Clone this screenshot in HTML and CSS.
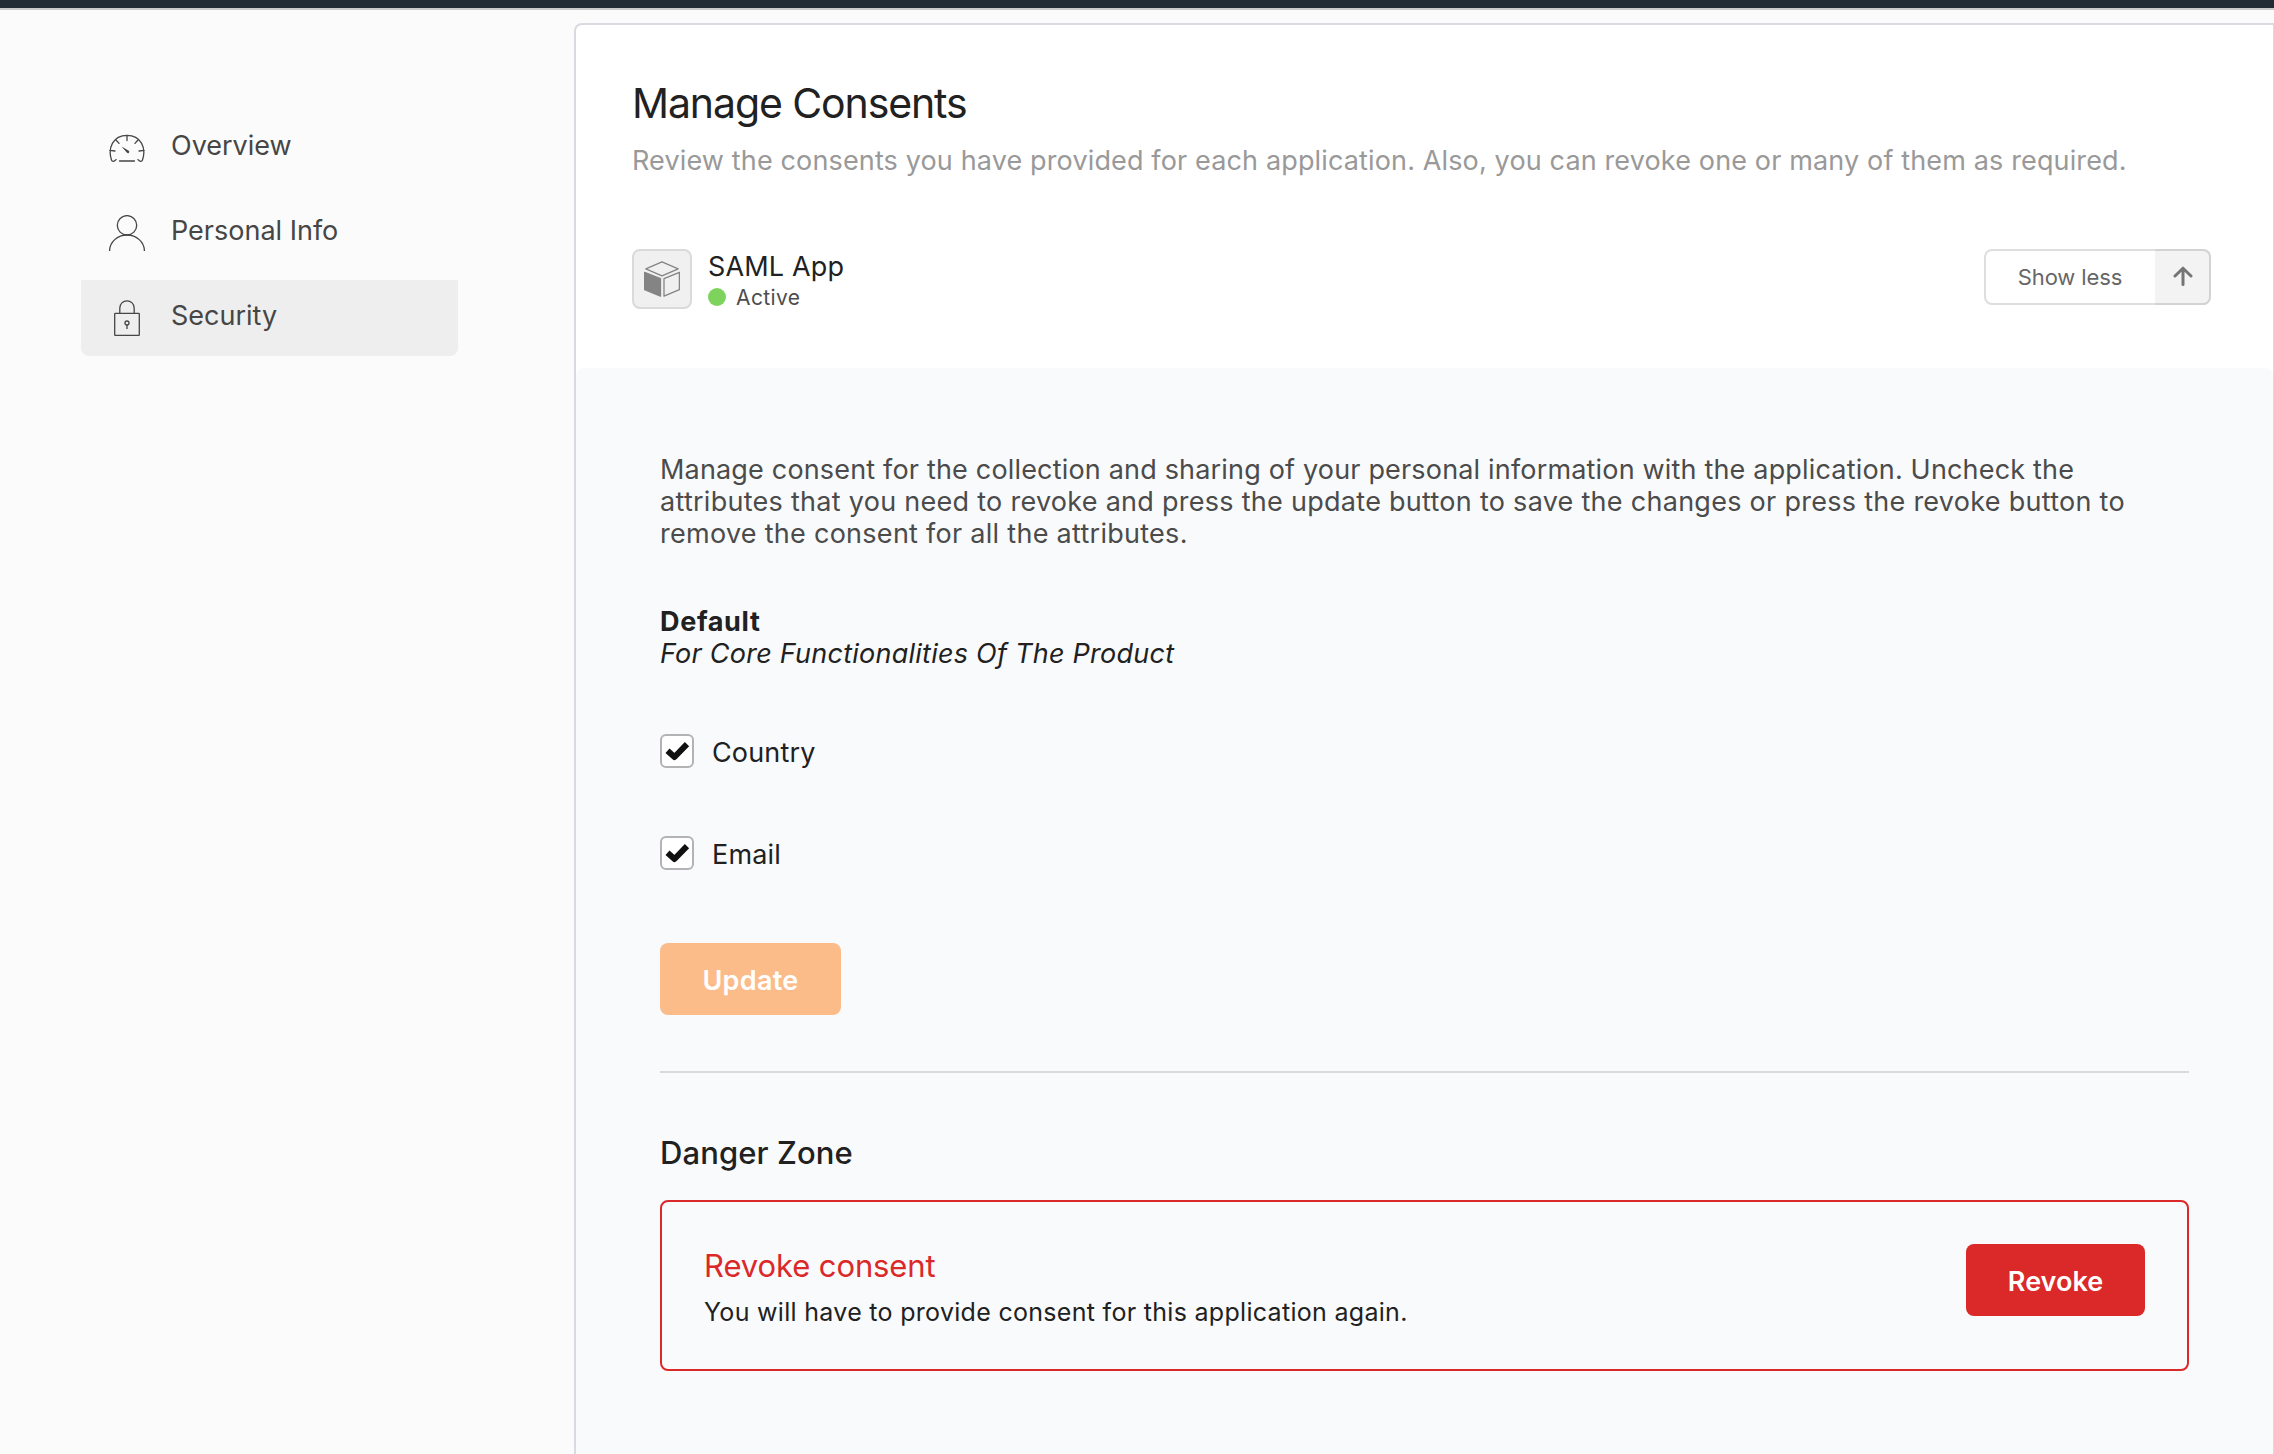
FILE: index.html
```html
<!DOCTYPE html>
<html lang="en">
<head>
<meta charset="utf-8">
<title>Manage Consents</title>
<link rel="stylesheet" href="styles.css">
</head>
<body>
<header class="topbar"></header>
<div class="layout">
  <nav class="sidebar">
    <a class="nav-item">
      <svg class="nav-icon" viewBox="0 0 36 36" fill="none" stroke="currentColor" stroke-width="1.3" stroke-linecap="round">
        <path d="M7 29.600C5 32 3 31.700 2.500 30C-1.500 18 4 5.300 18 5.300S37.500 18 33.500 30C33 31.700 31 32 29 29.600M10.500 31H25.500M18 5.500V10.500M6.800 9.800L10 13.400M29.200 9.800L26 13.400M.8 20.300L6 21M35.200 20.300L30 21"/>
        <path d="M12.500 16.500L19.800 20.800A1.300 1.300 0 0 1 18 22.800Z" fill="currentColor" stroke="none"/>
      </svg>
      <span class="nav-label">Overview</span>
    </a>
    <a class="nav-item">
      <svg class="nav-icon" viewBox="0 0 36 36" fill="none" stroke="currentColor" stroke-width="1.3">
        <circle cx="18" cy="10.300" r="9.700"/>
        <path d="M.6 36C.6 27 8.500 20 18 20S35.400 27 35.400 36"/>
      </svg>
      <span class="nav-label">Personal Info</span>
    </a>
    <a class="nav-item nav-item-active">
      <svg class="nav-icon" viewBox="0 0 36 36" fill="none" stroke="currentColor" stroke-width="1.3">
        <rect x="5.700" y="13.400" width="24.600" height="22" rx=".6"/>
        <path d="M10.800 13.400V8A7.200 7.200 0 0 1 25.200 8V13.400M18 25V29"/>
        <circle cx="18" cy="23" r="2"/>
      </svg>
      <span class="nav-label">Security</span>
    </a>
  </nav>
  <main class="card">
    <section class="card-head">
      <h1 class="title">Manage Consents</h1>
      <p class="subtitle">Review the consents you have provided for each application. Also, you can revoke one or many of them as required.</p>
      <div class="app">
        <span class="app-icon">
          <svg class="cube" viewBox="0 0 36 36" fill="none" stroke="#848484" stroke-width="1.3" stroke-linejoin="round">
            <path d="M18 .8L34.200 7.800L18 14.800L1.800 7.800Z"/>
            <path d="M20 17.700L35.400 11.300V28.600L20 35.200Z"/>
            <path d="M.6 11.300L16.500 17.700V35.200L.6 28.600Z" fill="#848484"/>
          </svg>
        </span>
        <div class="app-info">
          <span class="app-name">SAML App</span>
          <span class="app-status"><i class="dot"></i>Active</span>
        </div>
        <button class="toggle">
          <span class="toggle-label">Show less</span>
          <span class="toggle-icon">
            <svg width="20" height="20" viewBox="0 0 20 20" fill="none" stroke="#757575" stroke-width="3" stroke-linecap="round" stroke-linejoin="round"><path d="M10 18.500V2.200M2 10L10 2.200L18 10"/></svg>
          </span>
        </button>
      </div>
    </section>
    <section class="panel">
      <p class="intro">
        <span class="line line-1">Manage consent for the collection and sharing of your personal information with the application. Uncheck the</span>
        <span class="line">attributes that you need to revoke and press the update button to save the changes or press the revoke button to</span>
        <span class="line">remove the consent for all the attributes.</span>
      </p>
      <h2 class="purpose">Default</h2>
      <p class="purpose-note">For Core Functionalities Of The Product</p>
      <div class="checks">
        <label class="check">
          <span class="box"><svg class="tick" viewBox="0 0 24 20"><path d="M2.500 9.800L9.500 16L22 3.200" fill="none" stroke="#101010" stroke-width="6" stroke-linejoin="round"/></svg></span>
          <span class="check-label">Country</span>
        </label>
        <label class="check">
          <span class="box"><svg class="tick" viewBox="0 0 24 20"><path d="M2.500 9.800L9.500 16L22 3.200" fill="none" stroke="#101010" stroke-width="6" stroke-linejoin="round"/></svg></span>
          <span class="check-label">Email</span>
        </label>
      </div>
      <button class="btn btn-update">Update</button>
      <hr class="divider">
      <h3 class="danger-title">Danger Zone</h3>
      <div class="danger">
        <div class="danger-text">
          <h4 class="danger-head">Revoke consent</h4>
          <p class="danger-note">You will have to provide consent for this application again.</p>
        </div>
        <button class="btn btn-revoke">Revoke</button>
      </div>
    </section>
  </main>
</div>
</body>
</html>
```
FILE: styles.css
```css
* { box-sizing: border-box; }

body {
  margin: 0;
  height: 1454px;
  overflow: hidden;
  display: flex;
  flex-direction: column;
  background: #fbfbfb;
  color: #212121;
  font-family: Inter, "Liberation Sans", sans-serif;
  font-size: 27px;
}

h1, h2, h3, h4, p { margin: 0; font-weight: 400; }
button { font-family: inherit; border: 0; padding: 0; margin: 0; background: none; }

.topbar {
  flex: none;
  height: 10px;
  background: #222a33;
  border-bottom: 2px solid #c9c9cb;
}

.layout { flex: 1; display: flex; min-height: 0; }

.sidebar {
  flex: none;
  width: 574px;
  padding: 100px 116px 0 81px;
  display: flex;
  flex-direction: column;
  gap: 9px;
  color: #464646;
}
.nav-item { display: flex; align-items: center; gap: 26px; height: 76px; padding-left: 28px; }
.nav-item-active { background: #eee; border-radius: 0 0 8px 8px; }
.nav-icon { flex: none; width: 36px; height: 36px; }
.nav-label { padding-bottom: 6px; }

.card {
  flex: none;
  width: 1701px;
  margin-top: 13px;
  background: #fff;
  border: 2px solid #dadae0;
  border-bottom: 0;
  border-radius: 8px 0 0 0;
}
.card-head { padding: 53px 62px 59px 56px; }
.title { font-size: 41px; line-height: 50px; letter-spacing: -1.1px; }
.subtitle { margin-top: 16px; line-height: 34px; letter-spacing: .14px; color: #999; white-space: nowrap; }

.app { display: flex; align-items: flex-start; margin-top: 71px; height: 60px; }
.app-icon {
  width: 60px;
  height: 60px;
  display: flex;
  align-items: center;
  justify-content: center;
  background: #f0f0f0;
  border: 2px solid #dadada;
  border-radius: 8px;
}
.cube { width: 36px; height: 36px; }
.app-info { flex: 1; margin-left: 16px; padding-top: 3px; display: flex; flex-direction: column; gap: 3px; }
.app-name { line-height: 30px; letter-spacing: .15px; }
.app-status { display: flex; align-items: center; gap: 10px; font-size: 21px; line-height: 26px; letter-spacing: .4px; color: #4d4d4d; }
.dot { width: 18px; height: 18px; margin-bottom: 2px; border-radius: 50%; background: #7dd35b; }

.toggle { display: flex; width: 227px; height: 56px; border: 2px solid #dededf; border-radius: 8px; }
.toggle-label { flex: 1; padding-right: 1px; text-align: center; font-size: 22px; line-height: 52px; letter-spacing: -.1px; color: #666; }
.toggle-icon {
  width: 56px;
  height: 56px;
  margin: -2px -2px 0 0;
  padding: 0 0 2px 2px;
  display: flex;
  align-items: center;
  justify-content: center;
  background: #f3f3f3;
  border: 2px solid #d3d3d3;
  border-left: 0;
  border-radius: 0 8px 8px 0;
}

.panel { height: 1100px; padding: 86px 84px 0; background: #f9fafc; border-radius: 8px 8px 0 0; }
.intro { line-height: 32px; color: #4b4b4b; white-space: nowrap; }
.line { display: block; letter-spacing: .277px; }
.line-1 { letter-spacing: .175px; }
.purpose { margin-top: 56px; font-size: 27px; font-weight: 700; line-height: 32px; letter-spacing: .65px; }
.purpose-note { font-style: italic; line-height: 32px; letter-spacing: .24px; }

.checks { display: flex; flex-direction: column; gap: 68px; margin-top: 64px; }
.check { display: flex; gap: 18px; height: 34px; }
.box {
  width: 34px;
  height: 34px;
  display: flex;
  align-items: center;
  justify-content: center;
  background: #fff;
  border: 2px solid #b3b3b5;
  border-radius: 6px;
}
.tick { width: 24px; height: 20px; overflow: visible; }
.check-label { padding-top: 2px; line-height: 34px; letter-spacing: .15px; }

.btn { display: block; height: 72px; padding-top: 2px; border-radius: 8px; color: #fff; font-size: 27px; font-weight: 600; }
.btn-update { width: 181px; margin-top: 73px; background: #fcbc8a; letter-spacing: .3px; }
.btn-revoke { width: 179px; background: #db2828; }
.divider { margin: 56px 0 0; height: 2px; border: 0; background: #d8dadc; }

.danger-title { margin-top: 62px; font-size: 31px; font-weight: 500; line-height: 36px; letter-spacing: .1px; }
.danger {
  display: flex;
  justify-content: space-between;
  align-items: flex-start;
  height: 171px;
  margin-top: 29px;
  padding: 42px 42px 0;
  border: 2px solid #db2828;
  border-radius: 8px;
}
.danger-text { padding-top: 4px; }
.danger-head { font-size: 31px; line-height: 36px; letter-spacing: -.1px; color: #db2828; }
.danger-note { margin-top: 12px; font-size: 25px; line-height: 32px; letter-spacing: .3px; }
```
